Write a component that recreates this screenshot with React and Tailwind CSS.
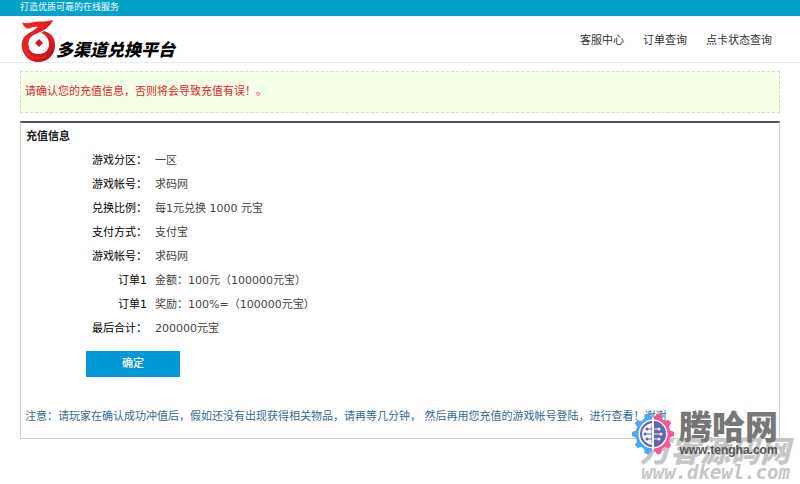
import React from 'react';

const navLinks = [
  { name: '客服中心', href: '#service' },
  { name: '订单查询', href: '#orders' },
  { name: '点卡状态查询', href: '#cards' },
];

const details = [
  { label: '游戏分区：', value: '一区' },
  { label: '游戏帐号：', value: '求码网' },
  { label: '兑换比例：', value: '每1元兑换 1000 元宝' },
  { label: '支付方式：', value: '支付宝' },
  { label: '游戏帐号：', value: '求码网' },
  { label: '订单1', value: '金额：100元（100000元宝）' },
  { label: '订单1', value: '奖励：100%=（100000元宝）' },
  { label: '最后合计：', value: '200000元宝' },
];

const LogoMark = () => (
  <svg width="35" height="42" viewBox="0 0 35 42" aria-hidden="true">
    <defs>
      <linearGradient id="logoRed" x1="0" y1="0" x2="1" y2="1">
        <stop offset="0" stopColor="#f0282b" />
        <stop offset="0.6" stopColor="#db1b1f" />
        <stop offset="1" stopColor="#a80e13" />
      </linearGradient>
    </defs>
    {/* flag and left sweep */}
    <path
      fill="url(#logoRed)"
      d="M1 2 C4 4 8 3 13 2 C20 1 26 2 32 0 C30 5 27 7 23 10 C18 13 12 14 9 18 C7 21 7 25 8 28 L5 35 C1 31 0 26 1 22 C2 16 8 13 13 10 L17 7 C12 6 8 10 5 8 C3 7 2 5 1 2 Z"
    />
    {/* ring */}
    <path
      fill="url(#logoRed)"
      d="M23 11 C31 13 34 19 34 25 C34 35 27 42 17 42 C8 42 1 35 1 25 L7 23 C7 31 12 34 18 34 C24 34 28 30 28 24 C28 19 25 15 20 13 Z"
    />
    <path d="M3 29 C7 38 17 40 25 36" fill="none" stroke="#f4575a" strokeWidth="1" opacity="0.5" />
    <path d="M18 19 L22 23 L18 27 L14 23 Z" fill="#d0171c" />
  </svg>
);

const teeth = [18, 54, 90, 126, 162, 198, 234, 270, 306, 342];

const GearMark = () => (
  <svg width="44" height="44" viewBox="-22 -22 44 44" aria-hidden="true">
    <defs>
      <clipPath id="gearLeft"><rect x="-22" y="-22" width="21" height="44" /></clipPath>
      <clipPath id="gearRight"><rect x="1" y="-22" width="21" height="44" /></clipPath>
      <g id="gear">
        <circle r="16" fill="none" strokeWidth="3" stroke="currentColor" />
        {teeth.map((angle) => (
          <path key={angle} transform={`rotate(${angle})`} d="M-4 -16 L-2 -21 H2 L4 -16 Z" fill="currentColor" />
        ))}
      </g>
    </defs>
    <circle r="16" fill="#fff" />
    <g clipPath="url(#gearLeft)" color="#4fa8ef">
      <use href="#gear" />
      <circle r="12" fill="#f3f3fb" stroke="#6164ae" strokeWidth="2" />
      <path d="M-1 -5 H-6 M-1 0 H-8 M-1 5 H-6 M-1 -9 V9" fill="none" stroke="#6164ae" strokeWidth="1" />
      <g fill="#6164ae">
        <circle cx="-6" cy="-5" r="1.5" />
        <circle cx="-8" cy="0" r="1.5" />
        <circle cx="-6" cy="5" r="1.5" />
      </g>
    </g>
    <g clipPath="url(#gearRight)" color="#f9549b">
      <use href="#gear" />
      <circle r="13" fill="#6164ae" />
      <path d="M1 -5 H6 M1 0 H8 M1 5 H6" fill="none" stroke="#f3f3fb" strokeWidth="1" />
      <g fill="#f3f3fb">
        <circle cx="6" cy="-5" r="1.5" />
        <circle cx="8" cy="0" r="1.5" />
        <circle cx="6" cy="5" r="1.5" />
      </g>
    </g>
  </svg>
);

const Header = () => (
  <header>
    <div className="h-4 bg-[#02a2cb] px-5 text-[9px] leading-[14px] text-white">打造优质可靠的在线服务</div>
    <div className="flex h-[47px] items-center justify-between border-b border-[#ececec] pr-7 pl-[21px]">
      <a href="#home" className="flex items-end pt-1">
        <LogoMark />
        <span className="text-[17px] leading-6 font-black whitespace-nowrap text-black italic">多渠道兑换平台</span>
      </a>
      <nav className="flex gap-[19px] pt-1">
        {navLinks.map((link) => (
          <a key={link.name} href={link.href} className="text-[#333] hover:text-[#02a2cb]">
            {link.name}
          </a>
        ))}
      </nav>
    </div>
  </header>
);

const Watermark = () => (
  <div className="pointer-events-none absolute right-2.5 bottom-1 whitespace-nowrap">
    <div className="text-right text-[#c6c6c6] italic">
      <div className="text-[30px] leading-6 font-black">万客源码网</div>
      <div className="font-['DejaVu_Sans_Mono',monospace] text-[19px] leading-4 font-bold">www.dkewl.com</div>
    </div>
    <div className="absolute right-3 bottom-6 flex items-center gap-1">
      <GearMark />
      <div className="text-center">
        <div className="text-[33px] leading-8 font-black text-[#777]">腾哈网</div>
        <div className="font-['Liberation_Sans',sans-serif] text-[12px] leading-3 font-bold text-[#555]">www.tengha.com</div>
      </div>
    </div>
  </div>
);

export default function App() {
  return (
    <div className="relative min-h-screen bg-white font-['DejaVu_Sans','Noto_Sans_CJK_SC',sans-serif] text-[11px] leading-4">
      <Header />
      <main className="px-5 pt-2">
        <p className="border border-dashed border-[#d3e3b8] bg-[#f5ffe8] px-1 py-3 text-[#e0262b]">
          请确认您的充值信息，否则将会导致充值有误！。
        </p>
        <section className="mt-2 border border-t-2 border-[#ccc] border-t-[#555]">
          <h1 className="px-[5px] pt-1.5 pb-1 font-bold text-[#222]">充值信息</h1>
          <dl>
            {details.map((item, i) => (
              <div key={i} className="flex gap-2 leading-6">
                <dt className="w-[126px] text-right text-black">{item.label}</dt>
                <dd className="text-[#444]">{item.value}</dd>
              </div>
            ))}
          </dl>
          <button type="button" className="mt-2.5 ml-[65px] block h-[26px] w-[94px] bg-[#0398d8] font-medium text-white">
            确定
          </button>
          <p className="px-1 pt-8 pb-[13px] text-[#38688f]">
            注意：请玩家在确认成功冲值后，假如还没有出现获得相关物品，请再等几分钟， 然后再用您充值的游戏帐号登陆，进行查看！谢谢
          </p>
        </section>
      </main>
      <Watermark />
    </div>
  );
}
